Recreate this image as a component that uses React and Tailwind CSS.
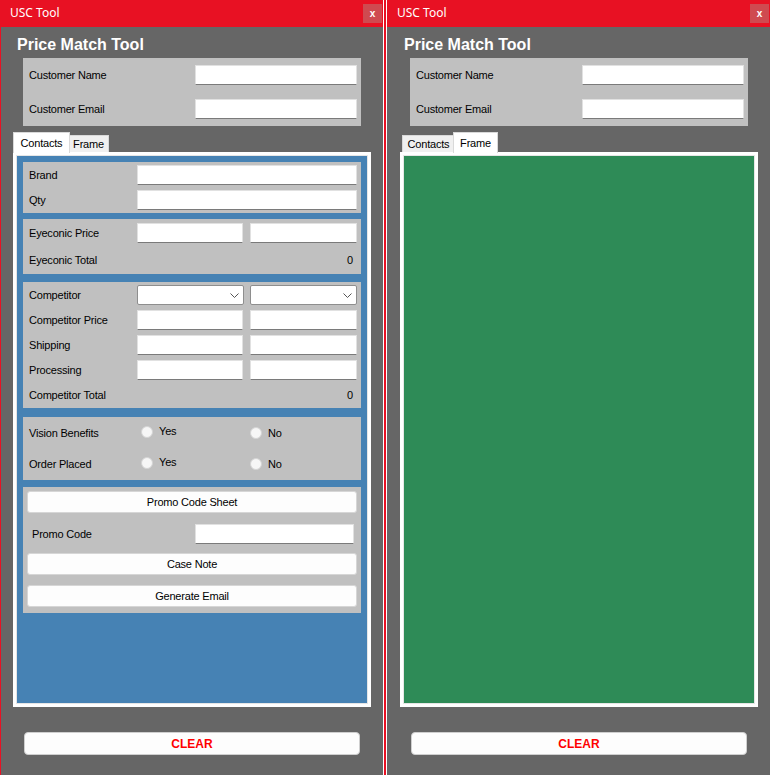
import React from 'react'

const TextBox = ({ w }) => (
    <div className={`h-[20px] bg-white border border-[#e1e1e1] border-b-[#7a7a7a] ${w}`} />
)

const Select = () => (
    <div className="h-[20px] w-[107px] bg-white border border-[#8e8e8e] rounded-[2px] flex items-center justify-end pr-[4px]">
        <svg width="9" height="5" viewBox="0 0 9 5">
            <path d="M0.5 0.5 L4.5 4.5 L8.5 0.5" fill="none" stroke="#555" strokeWidth="1" />
        </svg>
    </div>
)

const Radio = ({ label }) => (
    <div className="flex items-center gap-[6px]">
        <span className="w-[12px] h-[12px] rounded-full bg-[#f6f6f6] border border-[#d4d4d4]" />
        <span>{label}</span>
    </div>
)

const Btn = ({ children }) => (
    <div className="h-[22px] w-[330px] bg-[#fdfdfd] border border-[#d6d6d6] rounded-[3px] flex items-center justify-center">
        {children}
    </div>
)

const Tab = ({ label, active, w }) =>
    active ? (
        <div
            className={`relative z-10 -mx-[2px] h-[21px] -mb-[1px] bg-white border border-b-0 border-[#d9d9d9] flex items-center justify-center ${w}`}
        >
            {label}
        </div>
    ) : (
        <div
            className={`h-[17px] bg-[#f0f0f0] border border-b-0 border-[#d9d9d9] flex items-center justify-center ${w}`}
        >
            {label}
        </div>
    )

const ContactsPanel = () => (
    <div className="flex flex-col">
        {/* brand / qty */}
        <div className="h-[51px] bg-[#c0c0c0] pl-[6px] pr-[4px] pt-[3px] flex flex-col gap-[5px]">
            <div className="flex items-center">
                <span className="w-[108px]">Brand</span>
                <TextBox w="w-[220px]" />
            </div>
            <div className="flex items-center">
                <span className="w-[108px]">Qty</span>
                <TextBox w="w-[220px]" />
            </div>
        </div>

        {/* eyeconic */}
        <div className="mt-[6px] h-[55px] bg-[#c0c0c0] pl-[6px] pr-[4px] pt-[4px] flex flex-col">
            <div className="flex items-center">
                <span className="w-[108px]">Eyeconic Price</span>
                <TextBox w="w-[106px]" />
                <div className="w-[7px]" />
                <TextBox w="w-[107px]" />
            </div>
            <div className="mt-[5px] h-[24px] flex items-center justify-between pr-[4px]">
                <span>Eyeconic Total</span>
                <span>0</span>
            </div>
        </div>

        {/* competitor */}
        <div className="mt-[8px] h-[126px] bg-[#c0c0c0] pl-[6px] pr-[4px] pt-[3px] flex flex-col gap-[5px]">
            <div className="flex items-center">
                <span className="w-[108px]">Competitor</span>
                <div className="w-[106px]">
                    <Select />
                </div>
                <div className="w-[7px]" />
                <Select />
            </div>
            {['Competitor Price', 'Shipping', 'Processing'].map((l) => (
                <div className="flex items-center" key={l}>
                    <span className="w-[108px]">{l}</span>
                    <TextBox w="w-[106px]" />
                    <div className="w-[7px]" />
                    <TextBox w="w-[107px]" />
                </div>
            ))}
            <div className="-mt-[2px] h-[24px] flex items-center justify-between pr-[4px]">
                <span>Competitor Total</span>
                <span>0</span>
            </div>
        </div>

        {/* radios */}
        <div className="mt-[9px] h-[63px] bg-[#c0c0c0] pl-[6px] pt-[4px] flex flex-col gap-[7px]">
            {['Vision Benefits', 'Order Placed'].map((l) => (
                <div className="h-[24px] flex items-center" key={l}>
                    <span className="w-[112px]">{l}</span>
                    <div className="w-[109px] pb-[3px]">
                        <Radio label="Yes" />
                    </div>
                    <Radio label="No" />
                </div>
            ))}
        </div>

        {/* actions */}
        <div className="mt-[7px] h-[126px] bg-[#c0c0c0] pl-[4px] pt-[4px] flex flex-col">
            <Btn>Promo Code Sheet</Btn>
            <div className="mt-[11px] flex items-center">
                <span className="w-[168px] pl-[5px]">Promo Code</span>
                <TextBox w="w-[159px]" />
            </div>
            <div className="mt-[9px]">
                <Btn>Case Note</Btn>
            </div>
            <div className="mt-[10px]">
                <Btn>Generate Email</Btn>
            </div>
        </div>
    </div>
)

const Window = ({ tab, className }) => (
    <div
        className={`w-[383px] h-[775px] bg-[#666666] flex flex-col text-[11px] tracking-[-0.2px] text-black font-['Liberation_Sans',Arial,sans-serif] ${className}`}
    >
        <div className="h-[27px] bg-[#e81123] flex items-center pl-[10px] pr-[1px]">
            <span className="text-white text-[12px] tracking-normal font-['Noto_Sans',sans-serif] pb-[1px]">
                USC Tool
            </span>
            <div className="ml-auto w-[19px] h-[19px] bg-[#cf4a50] flex items-center justify-center text-white text-[10px] font-bold tracking-normal">
                x
            </div>
        </div>

        <div className="flex flex-col pt-[9px]">
            <h1 className="ml-[17px] h-[18px] leading-[18px] text-[16px] font-bold text-white tracking-normal">
                Price Match Tool
            </h1>

            <div className="ml-[23px] mt-[4px] w-[338px] h-[68px] bg-[#c0c0c0] pl-[6px] pr-[4px] py-[7px] flex flex-col justify-between">
                <div className="flex items-center">
                    <span className="flex-1">Customer Name</span>
                    <TextBox w="w-[162px]" />
                </div>
                <div className="flex items-center">
                    <span className="flex-1">Customer Email</span>
                    <TextBox w="w-[162px]" />
                </div>
            </div>

            <div className="ml-[15px] mt-[6px] h-[20px] flex items-end">
                <Tab label="Contacts" active={tab === 'contacts'} w={tab === 'contacts' ? 'w-[57px]' : 'w-[53px]'} />
                <Tab label="Frame" active={tab === 'frame'} w={tab === 'frame' ? 'w-[45px]' : 'w-[41px]'} />
            </div>

            <div className="ml-[13px] w-[358px] h-[555px] border-[3px] border-white">
                {tab === 'contacts' ? (
                    <div className="h-full border border-[#e6e6e6] bg-[#4682b4] pt-[6px] px-[6px]">
                        <ContactsPanel />
                    </div>
                ) : (
                    <div className="h-full border border-[#e6e6e6] bg-[#2e8b57]" />
                )}
            </div>

            <div className="ml-[24px] mt-[25px] w-[336px] h-[23px] bg-[#fdfdfd] border border-[#cfcfcf] rounded-[4px] flex items-center justify-center text-[#ff0000] text-[12px] font-bold tracking-normal">
                CLEAR
            </div>
        </div>
    </div>
)

export default function App() {
    return (
        <div className="w-[770px] h-[775px] flex bg-white overflow-hidden">
            <Window tab="contacts" className="shadow-[inset_1px_0_0_#e81123]" />
            <div className="w-[1px] bg-white" />
            <div className="w-[2px] bg-[#e81123]" />
            <div className="w-[1px] bg-white" />
            <Window tab="frame" />
        </div>
    )
}
